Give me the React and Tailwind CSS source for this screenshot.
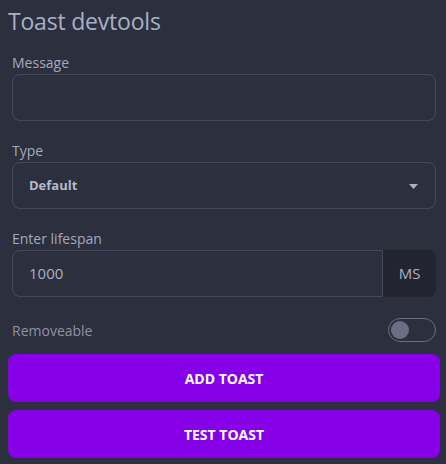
import React from 'react';

const Field = ({ label, children }) => (
  <div className="px-1">
    <label className="block text-[14px] leading-[18px] text-[#a3aabd] mb-[2px]">{label}</label>
    {children}
  </div>
);

export default function App() {
  const [removeable, setRemoveable] = React.useState(false);

  return (
    <div className="min-h-screen w-full bg-[#2c2f3d] font-['Open_Sans',sans-serif] pl-2 pr-[6px] pt-[6px]">
      <h1 className="text-[23px] leading-[30px] text-[#a9b0c6] tracking-[-0.2px]">Toast devtools</h1>

      <div className="mt-[18px]">
        <Field label="Message">
          <input className="w-full h-[47px] rounded-[8px] border border-[#464a5a] bg-transparent px-4 text-[14px] text-[#a9b0c6] outline-none" />
        </Field>
      </div>

      <div className="mt-[21px]">
        <Field label="Type">
          <div className="flex items-center justify-between h-[47px] rounded-[8px] border border-[#464a5a] pl-4 pr-[17px]">
            <span className="text-[13px] font-bold text-[#b3bace]">Default</span>
            <svg width="9" height="5" viewBox="0 0 9 5" className="mt-[2px]">
              <path d="M0 0h9L4.5 5z" fill="#a9b0c6" />
            </svg>
          </div>
        </Field>
      </div>

      <div className="mt-[21px]">
        <Field label="Enter lifespan">
          <div className="flex h-[47px]">
            <input
              defaultValue="1000"
              className="flex-1 min-w-0 rounded-l-[8px] border border-[#464a5a] bg-transparent px-4 text-[15px] text-[#a9b0c6] outline-none"
            />
            <div className="w-[53px] flex items-center justify-center rounded-r-[8px] bg-[#22242f] text-[15px] text-[#a9b0c6]">MS</div>
          </div>
        </Field>
      </div>

      <div className="flex items-center justify-between px-1 mt-[21px]">
        <span className="text-[14px] text-[#8d93a5]">Removeable</span>
        <button
          onClick={() => setRemoveable(!removeable)}
          className="relative w-[48px] h-[24px] rounded-full border border-[#6a6e80] bg-transparent"
        >
          <span className={`absolute top-[2px] w-[18px] h-[18px] rounded-full bg-[#6c6f84] ${removeable ? 'left-[26px]' : 'left-[2px]'}`} />
        </button>
      </div>

      <div className="flex flex-col gap-2 mt-[12px]">
        <button className="h-[48px] rounded-[8px] bg-[#8600e8] text-white text-[14px] font-bold uppercase">Add toast</button>
        <button className="h-[48px] rounded-[8px] bg-[#8600e8] text-white text-[14px] font-bold uppercase">Test toast</button>
      </div>
    </div>
  );
}
